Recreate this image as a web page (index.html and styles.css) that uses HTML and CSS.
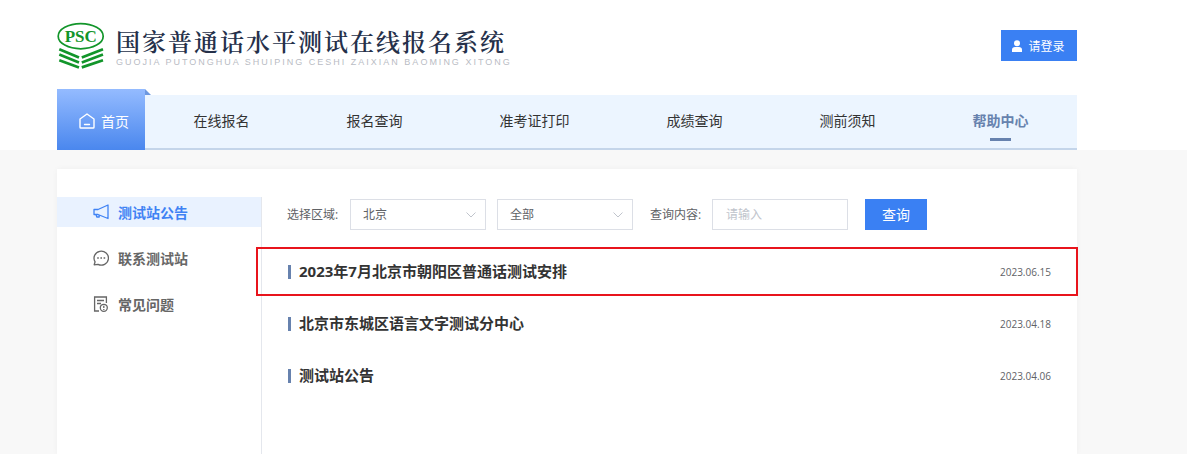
FILE: index.html
```html
<!DOCTYPE html>
<html lang="zh-CN">
<head>
  <meta charset="UTF-8">
  <meta name="viewport" content="width=device-width, initial-scale=1.0">
  <title>国家普通话水平测试在线报名系统</title>
  <link rel="stylesheet" href="styles.css">
</head>
<body>
<header class="header">
  <div class="wrap">
    <div class="top">
      <a class="logo" href="#">
        <svg class="logo-mark" viewBox="0 0 48 48" width="48" height="48" aria-hidden="true">
          <ellipse cx="23.7" cy="14.2" rx="22.5" ry="12.6" fill="#fff" stroke="#12952a" stroke-width="1.7"/>
          <text class="logo-psc" x="23.7" y="19.5" text-anchor="middle">PSC</text>
          <g fill="none" stroke="#12952a" stroke-width="2.7">
            <path d="M2.300 27.200L22 35.500M2.300 32.600L22 40.400M2.300 38.200L22 45.400"/>
            <path d="M46 27.200L24.800 35.500M46 32.600L24.800 40.400M46 38.200L24.800 45.400"/>
          </g>
        </svg>
        <span class="logo-text">
          <span class="logo-title">国家普通话水平测试在线报名系统</span>
          <span class="logo-sub">GUOJIA PUTONGHUA SHUIPING CESHI ZAIXIAN BAOMING XITONG</span>
        </span>
      </a>
      <button class="login" type="button">
        <svg viewBox="0 0 12 12" width="12" height="12" fill="#fff" aria-hidden="true">
          <circle cx="6" cy="3.200" r="3"/>
          <path d="M1 12V9.800C1 8 2.300 7 4 7h4c1.700 0 3 1 3 2.800V12z"/>
        </svg>
        请登录
      </button>
    </div>

    <nav class="nav">
      <a class="nav-home" href="#">
        <svg viewBox="0 0 16 16" width="16" height="16" fill="none" stroke="#fff" stroke-width="1.4" stroke-linejoin="round" stroke-linecap="round" aria-hidden="true">
          <path d="M1 6L8 1l7 5v8.200a.8.8 0 0 1-.8.8H1.800a.8.8 0 0 1-.8-.8z"/>
          <path d="M5.500 11.500h5"/>
        </svg>
        首页
      </a>
      <div class="nav-list">
        <a href="#">在线报名</a>
        <a href="#">报名查询</a>
        <a href="#">准考证打印</a>
        <a href="#">成绩查询</a>
        <a href="#">测前须知</a>
        <a class="active" href="#">帮助中心</a>
      </div>
    </nav>
  </div>
</header>

<main class="main wrap">
  <div class="panel">
    <aside class="side">
      <a class="active" href="#">
        <svg viewBox="0 0 16 16" width="16" height="16" fill="none" stroke="currentColor" stroke-width="1.3" stroke-linejoin="round" aria-hidden="true">
          <path d="M1 5.500h4L15 1v13.500L5 10.500H1z"/>
          <path d="M3 10.500l.8 2.500h2.400v-2"/>
        </svg>
        测试站公告
      </a>
      <a href="#">
        <svg viewBox="0 0 16 16" width="16" height="16" fill="none" stroke="currentColor" stroke-width="1.3" aria-hidden="true">
          <path d="M1.200 14.800l.9-3A7.200 7 0 1 1 5 14.400z" stroke-linejoin="round"/>
          <path d="M4.200 8h1.600M7.400 8H9M10.600 8h1.600" stroke-width="1.500"/>
        </svg>
        联系测试站
      </a>
      <a href="#">
        <svg viewBox="0 0 16 16" width="16" height="16" fill="none" stroke="currentColor" stroke-width="1.3" aria-hidden="true">
          <path d="M6 15H1.600V1h11.800v6"/>
          <path d="M4 4.500h7M4 7.500h4"/>
          <circle cx="10.800" cy="11.800" r="3.500"/>
          <path d="M10.800 9.800v2.300M10.800 12.900v1"/>
        </svg>
        常见问题
      </a>
    </aside>

    <section class="content">
      <form class="filter">
        <label for="area">选择区域:</label>
        <div class="select">
          <select id="area">
            <option>北京</option>
          </select>
          <svg viewBox="0 0 10 6" width="10" height="6" fill="none" stroke="#c0c4cc" aria-hidden="true"><path d="M.5.5L5 5 9.500.5"/></svg>
        </div>
        <div class="select">
          <select aria-label="测试站">
            <option>全部</option>
          </select>
          <svg viewBox="0 0 10 6" width="10" height="6" fill="none" stroke="#c0c4cc" aria-hidden="true"><path d="M.5.5L5 5 9.500.5"/></svg>
        </div>
        <label class="second" for="keyword">查询内容:</label>
        <input id="keyword" type="text" placeholder="请输入">
        <button class="search" type="button">查询</button>
      </form>

      <ul class="news">
        <li class="marked">
          <a href="#">2023年7月北京市朝阳区普通话测试安排</a>
          <time>2023.06.15</time>
        </li>
        <li>
          <a href="#">北京市东城区语言文字测试分中心</a>
          <time>2023.04.18</time>
        </li>
        <li>
          <a href="#">测试站公告</a>
          <time>2023.04.06</time>
        </li>
      </ul>
    </section>
  </div>
</main>
</body>
</html>
```
FILE: styles.css
```css
* {
  box-sizing: border-box;
}
body {
  display: flex;
  flex-direction: column;
  min-height: 100vh;
  margin: 0;
  background: #f8f8f8;
  color: #333;
  font-family: "Open Sans", "Noto Sans CJK SC", sans-serif;
  font-size: 14px;
}
a {
  color: inherit;
  text-decoration: none;
}
svg {
  flex: none;
}
button, input, select {
  font-family: inherit;
  font-size: 12px;
}
.wrap {
  padding: 0 110px 0 57px;
}

/* header */
.header {
  background: #fff;
}
.top {
  display: flex;
  align-items: center;
  justify-content: space-between;
  height: 89px;
  padding-top: 2px;
}
.logo {
  display: flex;
  align-items: center;
  gap: 11px;
}
.logo-psc {
  fill: #12952a;
  font: bold 17px "Liberation Serif", serif;
}
.logo-text {
  display: flex;
  flex-direction: column;
}
.logo-title {
  color: #25304a;
  font-family: "Noto Serif CJK SC", "Noto Sans CJK SC", serif;
  font-size: 24px;
  font-weight: 600;
  line-height: 32px;
  letter-spacing: 2px;
  white-space: nowrap;
}
.logo-sub {
  color: #b9bcc4;
  font-family: "Liberation Sans", sans-serif;
  font-size: 9px;
  line-height: 10px;
  letter-spacing: 2px;
  white-space: nowrap;
}
.login {
  display: flex;
  align-items: center;
  justify-content: center;
  gap: 5px;
  width: 76px;
  height: 31px;
  padding: 0 2px 0 0;
  border: none;
  background: #3a80f3;
  color: #fff;
  cursor: pointer;
}

/* nav */
.nav {
  display: flex;
  align-items: flex-end;
}
.nav-home {
  position: relative;
  display: flex;
  align-items: center;
  gap: 6px;
  width: 88px;
  height: 61px;
  padding: 3px 0 0 22px;
  background: linear-gradient(#94bbff, #4a87ee);
  color: #fff;
}
.nav-home::after {
  content: "";
  position: absolute;
  top: 0;
  left: 100%;
  border-left: 6px solid #6d98e0;
  border-top: 6px solid transparent;
}
.nav-list {
  flex: 1;
  display: flex;
  justify-content: space-around;
  height: 55px;
  border-bottom: 2px solid #c4d5ea;
  background: #ecf5ff;
  line-height: 51px;
}
.nav-list a {
  position: relative;
}
.nav-list .active {
  color: #6782ae;
  font-weight: bold;
}
.nav-list .active::after {
  content: "";
  position: absolute;
  bottom: 7px;
  left: calc(50% - 11px);
  width: 21px;
  height: 3px;
  background: #6782ae;
}

/* main */
.main {
  flex: 1;
  display: flex;
  padding-top: 19px;
}
.panel {
  flex: 1;
  display: flex;
  padding-top: 28px;
  background: #fff;
  box-shadow: 0 0 6px rgba(0, 0, 0, 0.04);
}
.side {
  display: flex;
  flex-direction: column;
  gap: 16px;
  width: 205px;
  border-right: 1px solid #e4e7ed;
}
.side a {
  display: flex;
  align-items: center;
  gap: 9px;
  height: 30px;
  padding-left: 36px;
  color: #666;
  font-weight: bold;
}
.side .active {
  background: #e9f2ff;
  color: #3f82f4;
}
.content {
  flex: 1;
  padding: 0 26px 0 25px;
}

/* filter */
.filter {
  display: flex;
  align-items: center;
  height: 34px;
}
.filter label {
  width: 63px;
  color: #606266;
  font-size: 12px;
}
.filter .second {
  width: 62px;
  margin-left: 17px;
}
.select {
  position: relative;
  width: 136px;
}
.select + .select {
  margin-left: 11px;
}
.select svg {
  position: absolute;
  top: 13px;
  right: 10px;
  pointer-events: none;
}
select, input {
  width: 136px;
  height: 31px;
  padding: 0 13px;
  border: 1px solid #dcdfe6;
  border-radius: 0;
  background: #fff;
  color: #606266;
}
select {
  display: block;
  appearance: none;
  padding: 0 12px;
}
input::placeholder {
  color: #c0c4cc;
}
.search {
  width: 62px;
  height: 31px;
  margin-left: 17px;
  padding: 0;
  border: none;
  background: #3a80f3;
  color: #fff;
  font-size: 14px;
  cursor: pointer;
}

/* news list */
.news {
  margin: 15px 0 0;
  padding: 0;
  list-style: none;
}
.news li {
  position: relative;
  display: flex;
  align-items: center;
  height: 52px;
}
.news li::before {
  content: "";
  width: 3px;
  height: 14px;
  margin: 0 8px 0 1px;
  background: #6782ae;
}
.news a {
  flex: 1;
  padding-bottom: 3px;
  font-size: 15px;
  font-weight: bold;
}
.news time {
  color: #606266;
  font-size: 10px;
}
.news .marked::after {
  content: "";
  position: absolute;
  top: 1px;
  bottom: 2px;
  left: -31px;
  right: -27px;
  border: 2px solid #e8141c;
  pointer-events: none;
}
```
